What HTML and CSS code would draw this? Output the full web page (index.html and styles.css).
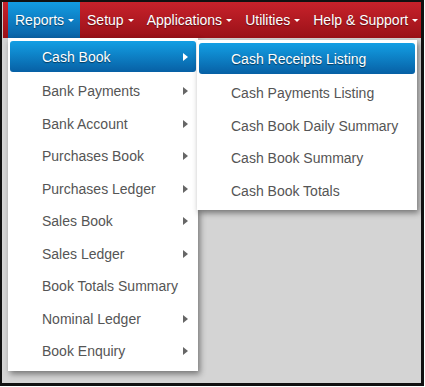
FILE: index.html
```html
<!DOCTYPE html>
<html lang="en">
<head>
  <meta charset="UTF-8" />
  <meta name="viewport" content="width=device-width, initial-scale=1.0" />
  <title>Reports Menu</title>
  <link rel="stylesheet" href="styles.css">
</head>
<body>
  <div class="frame">
    <nav class="navbar">
      <ul class="nav">
        <li class="nav-item open">
          <a href="#">Reports<span class="caret"></span></a>
          <ul class="dropdown">
            <li class="item active has-sub">
              <a href="#">Cash Book</a>
              <ul class="dropdown submenu">
                <li class="item active"><a href="#">Cash Receipts Listing</a></li>
                <li class="item"><a href="#">Cash Payments Listing</a></li>
                <li class="item"><a href="#">Cash Book Daily Summary</a></li>
                <li class="item"><a href="#">Cash Book Summary</a></li>
                <li class="item"><a href="#">Cash Book Totals</a></li>
              </ul>
            </li>
            <li class="item has-sub"><a href="#">Bank Payments</a></li>
            <li class="item has-sub"><a href="#">Bank Account</a></li>
            <li class="item has-sub"><a href="#">Purchases Book</a></li>
            <li class="item has-sub"><a href="#">Purchases Ledger</a></li>
            <li class="item has-sub"><a href="#">Sales Book</a></li>
            <li class="item has-sub"><a href="#">Sales Ledger</a></li>
            <li class="item"><a href="#">Book Totals Summary</a></li>
            <li class="item has-sub"><a href="#">Nominal Ledger</a></li>
            <li class="item has-sub"><a href="#">Book Enquiry</a></li>
          </ul>
        </li>
        <li class="nav-item"><a href="#">Setup<span class="caret"></span></a></li>
        <li class="nav-item"><a href="#">Applications<span class="caret"></span></a></li>
        <li class="nav-item"><a href="#">Utilities<span class="caret"></span></a></li>
        <li class="nav-item"><a href="#">Help &amp; Support<span class="caret"></span></a></li>
      </ul>
    </nav>
    <div class="workspace"></div>
  </div>
</body>
</html>
```

FILE: styles.css
```css
* {
  box-sizing: border-box;
}
body {
  margin: 0;
  padding: 0;
  font-family: "Liberation Sans", Arial, sans-serif;
  font-size: 14px;
  background: #fff;
}

ul {
  list-style: none;
  margin: 0;
  padding: 0;
}

a {
  text-decoration: none;
}

.frame {
  width: 424px;
  height: 386px;
  border: 2px solid #111;
  border-right-width: 3px;
  border-bottom-width: 3px;
  display: flex;
  flex-direction: column;
  overflow: hidden;
  background: #d3d3d3;
}

.navbar {
  height: 36px;
  background: linear-gradient(#c8222b, #9a1118);
  border-left: 1px solid #ccc;
  padding-left: 5px;
  flex-shrink: 0;
}

.nav {
  display: flex;
  height: 100%;
}

.nav-item {
  position: relative;
}

.nav-item > a {
  display: flex;
  align-items: center;
  height: 36px;
  padding: 0 6px 0 7px;
  color: #fff;
  text-shadow: 0 1px 1px rgba(0, 0, 0, 0.45);
  white-space: nowrap;
}

.nav-item.open > a {
  background: linear-gradient(#129ce2, #0a62a6);
}

.caret {
  display: inline-block;
  margin-left: 4px;
  width: 0;
  height: 0;
  border-left: 3px solid transparent;
  border-right: 3px solid transparent;
  border-top: 3px solid #fff;
}

.workspace {
  flex: 1;
  background: #d4d4d4;
}

.dropdown {
  position: absolute;
  top: 100%;
  left: 0;
  width: 190px;
  padding: 3px 2px;
  background: #fff;
  box-shadow: 2px 3px 6px rgba(0, 0, 0, 0.45);
  z-index: 10;
}

.item {
  position: relative;
  height: 32.5px;
}

.item.active {
  height: 34px;
}

.item > a {
  display: flex;
  align-items: center;
  height: 32.5px;
  padding-left: 32px;
  color: #555;
  border-radius: 3px;
  white-space: nowrap;
}

.item.active > a {
  height: 31px;
  padding-top: 1px;
  color: #fff;
  background: linear-gradient(#139fe4, #0760a5);
  text-shadow: 0 1px 1px rgba(0, 0, 0, 0.5);
}

.has-sub > a::after {
  content: "";
  position: absolute;
  right: 8px;
  top: 12px;
  width: 0;
  height: 0;
  border-top: 4px solid transparent;
  border-bottom: 4px solid transparent;
  border-left: 5px solid #666;
}

.has-sub.active > a::after {
  border-left-color: #fff;
}

.submenu {
  top: -1px;
  left: 187px;
  width: 220px;
  z-index: 11;
}
```
